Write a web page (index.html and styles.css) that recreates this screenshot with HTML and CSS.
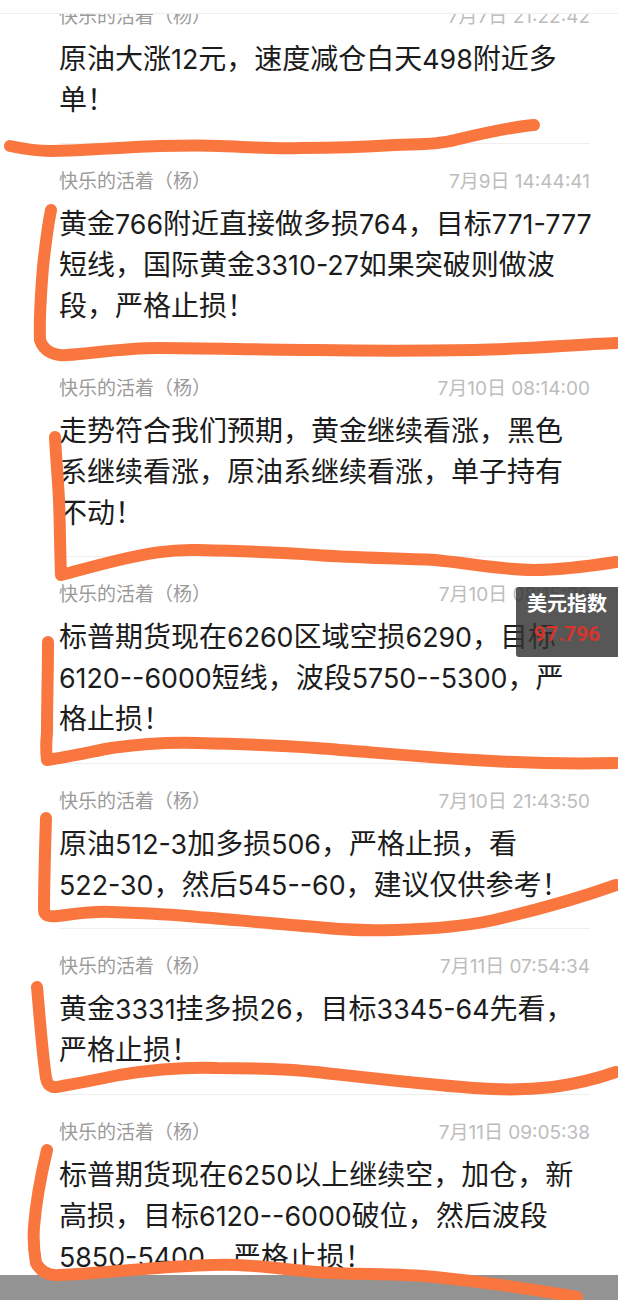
FILE: index.html
```html
<!DOCTYPE html>
<html lang="zh-CN">
<head>
    <meta charset="UTF-8">
    <meta name="viewport" content="width=device-width, initial-scale=1.0">
    <title>快乐的活着（杨）</title>
    <link rel="stylesheet" href="styles.css">
</head>
<body>
    <div class="screen">
        <div class="top-bar"></div>

        <div class="feed">
            <div class="post">
                <div class="post-head"><span>快乐的活着（杨）</span><span class="post-time">7月7日 21:22:42</span></div>
                <div class="post-text">原油大涨<span class="num">12</span>元，速度减仓白天<span class="num">498</span>附近多<br>单！</div>
            </div>
            <div class="post">
                <div class="post-head"><span>快乐的活着（杨）</span><span class="post-time">7月9日 14:44:41</span></div>
                <div class="post-text">黄金<span class="num">766</span>附近直接做多损<span class="num">764</span>，目标<span class="num">771-777</span><br>短线，国际黄金<span class="num">3310-27</span>如果突破则做波<br>段，严格止损！</div>
            </div>
            <div class="post">
                <div class="post-head"><span>快乐的活着（杨）</span><span class="post-time">7月10日 08:14:00</span></div>
                <div class="post-text">走势符合我们预期，黄金继续看涨，黑色<br>系继续看涨，原油系继续看涨，单子持有<br>不动！</div>
            </div>
            <div class="post">
                <div class="post-head"><span>快乐的活着（杨）</span><span class="post-time">7月10日 08:15:39</span></div>
                <div class="post-text">标普期货现在<span class="num">6260</span>区域空损<span class="num">6290</span>，目标<br><span class="num">6120--6000</span>短线，波段<span class="num">5750--5300</span>，严<br>格止损！</div>
            </div>
            <div class="post">
                <div class="post-head"><span>快乐的活着（杨）</span><span class="post-time">7月10日 21:43:50</span></div>
                <div class="post-text">原油<span class="num">512-3</span>加多损<span class="num">506</span>，严格止损，看<br><span class="num">522-30</span>，然后<span class="num">545--60</span>，建议仅供参考！</div>
            </div>
            <div class="post">
                <div class="post-head"><span>快乐的活着（杨）</span><span class="post-time">7月11日 07:54:34</span></div>
                <div class="post-text">黄金<span class="num">3331</span>挂多损<span class="num">26</span>，目标<span class="num">3345-64</span>先看，<br>严格止损！</div>
            </div>
            <div class="post">
                <div class="post-head"><span>快乐的活着（杨）</span><span class="post-time">7月11日 09:05:38</span></div>
                <div class="post-text">标普期货现在<span class="num">6250</span>以上继续空，加仓，新<br>高损，目标<span class="num">6120--6000</span>破位，然后波段<br><span class="num">5850-5400</span>，严格止损！</div>
            </div>
        </div>

        <div class="bottom-bar"></div>

        <div class="quote-tag">
            <div class="quote-name">美元指数</div>
            <div class="quote-value">97.796</div>
        </div>

        <!-- 手画的橙色标记线 -->
        <svg class="marks" width="618" height="1300" viewBox="0 0 618 1300" fill="none">
            <path d="M10 146 C24 149 36 151 51 151 C75 151 95 149 119 148 C155 146 190 145 221 146 C248 147 272 149 300 148 C332 148 365 147 395 145 C418 144 436 145 455 140 C480 134 510 127 534 125"/>
            <path d="M51 210 C47 230 45 248 43 267 C41 292 39 316 40 340 C44 352 55 356 67 355 C95 353 125 348 158 348 C210 348 262 350 316 350 C368 351 420 351 474 350 C522 349 570 345 616 343"/>
            <path d="M55 437 C56 458 58 479 59 500 C60 525 60 550 61 575 C80 570 98 565 119 560 C145 554 170 549 198 550 C238 551 276 552 316 555 C356 558 395 558 435 560 C468 563 500 570 534 570 C562 570 590 566 616 562"/>
            <path d="M48 642 C48 672 47 703 47 733 C46 742 46 752 47 760 C68 757 90 752 111 748 C140 744 168 742 198 743 C238 744 276 745 316 748 C370 752 420 757 474 760 C522 763 570 764 616 763"/>
            <path d="M46 818 C45 851 44 884 44 910 C44 916 50 917 58 916 C75 914 92 911 111 912 C140 913 168 914 198 917 C238 920 276 924 316 927 C342 930 368 931 395 930 C430 929 462 927 494 920 C537 910 577 899 616 885"/>
            <path d="M37 987 C40 1020 42 1050 46 1078 C48 1088 54 1088 62 1086 C80 1083 100 1079 119 1075 C150 1070 184 1067 217 1068 C250 1068 282 1068 316 1072 C370 1078 420 1084 474 1088 C500 1090 528 1090 553 1087 C575 1084 596 1079 616 1072"/>
            <path d="M47 1150 C41 1175 36 1201 34 1227 C33 1239 34 1251 36 1263 C41 1272 49 1276 59 1275 C92 1274 125 1270 158 1268 C185 1266 211 1264 237 1265 C264 1266 290 1270 316 1272 C356 1275 396 1273 435 1277 C484 1282 532 1289 577 1297"/>
        </svg>
    </div>
</body>
</html>
```
FILE: styles.css
```css
html, body {
    margin: 0;
    padding: 0;
}
body {
    font-family: Inter, "Noto Sans CJK SC", sans-serif;
    background-color: #fff;
}
.screen {
    position: relative;
    width: 618px;
    height: 1300px;
    overflow: hidden;
}
.top-bar {
    position: absolute;
    top: 0;
    left: 0;
    right: 0;
    height: 13px;
    background-color: #fff;
    border-bottom: 1px solid #eeeeee;
}
.feed {
    margin-top: -21.5px;
}
.post {
    margin: 0 28px 0 59px;
    padding: 26px 0 22.5px;
    border-bottom: 1px solid #efefef;
}
.post-head {
    display: flex;
    justify-content: space-between;
    height: 24px;
    line-height: 24px;
    font-size: 19px;
    color: #9a9a9a;
    margin-bottom: 10px;
}
.post-time {
    color: #bdbdbd;
}
.post-text {
    font-size: 28px;
    line-height: 41px;
    white-space: nowrap;
    color: #1c1c1c;
}
.num {
    font-size: 26.8px;
}
.bottom-bar {
    position: absolute;
    left: 0;
    right: 0;
    bottom: 0;
    height: 25px;
    background-color: #939393;
}
.quote-tag {
    position: absolute;
    top: 587px;
    right: 0;
    width: 102px;
    height: 70px;
    box-sizing: border-box;
    padding-top: 3px;
    border-radius: 3px 0 0 3px;
    background-color: rgba(50, 50, 50, 0.82);
    text-align: center;
    font-family: Roboto, "Noto Sans CJK SC", sans-serif;
}
.quote-name {
    font-size: 20px;
    line-height: 28px;
    font-weight: 700;
    color: #fff;
}
.quote-value {
    font-size: 21px;
    line-height: 32px;
    font-weight: 700;
    color: #d8342c;
}
.marks {
    position: absolute;
    top: 0;
    left: 0;
}
.marks path {
    stroke: #f9763f;
    stroke-width: 12;
    stroke-linecap: round;
    stroke-linejoin: round;
}
```
